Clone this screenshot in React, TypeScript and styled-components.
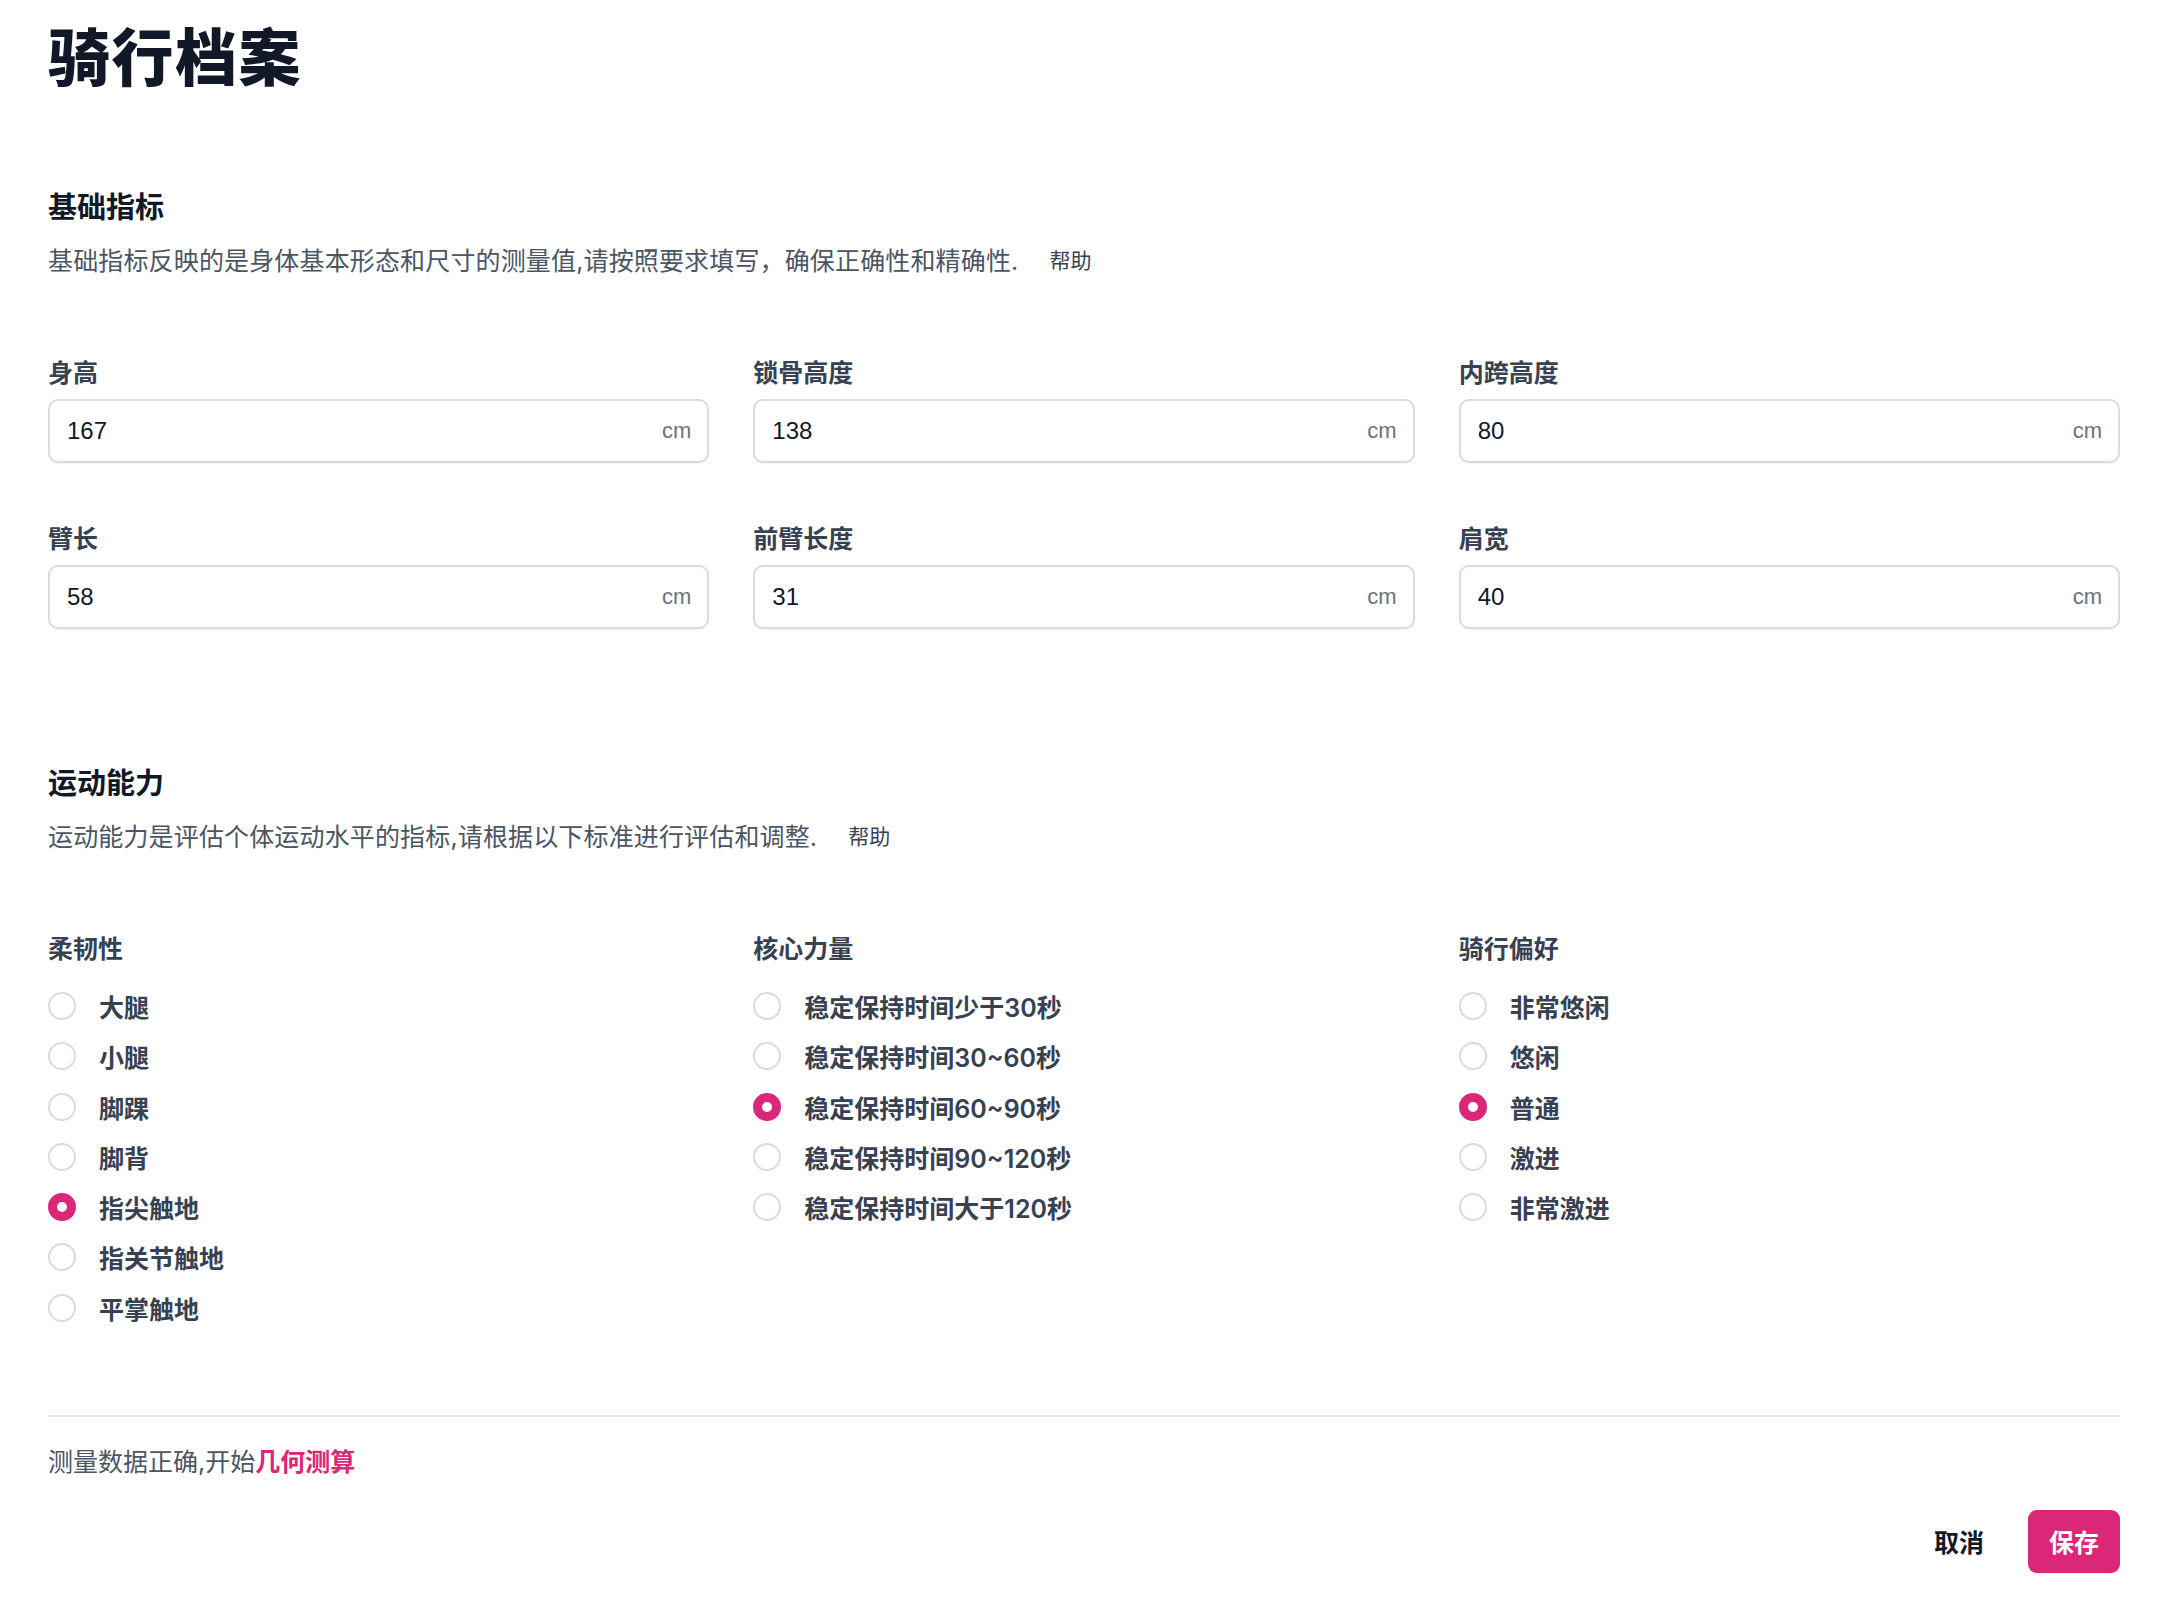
import React from "react";
import styled, { createGlobalStyle } from "styled-components";

const GlobalStyle = createGlobalStyle`
  html, body {
    margin: 0;
    padding: 0;
    background: #ffffff;
  }
  body {
    font-family: Inter, "Noto Sans CJK SC", "Noto Sans", sans-serif;
    color: #111827;
  }
  * {
    box-sizing: border-box;
  }
`;

const PINK = "#db2777";

const Page = styled.div`
  padding: 19px 46px 40px 48px;
  display: flex;
  flex-direction: column;
`;

const PageTitle = styled.h1`
  margin: 0;
  font-size: 62px;
  line-height: 80px;
  font-weight: 800;
  color: #111827;
  letter-spacing: 1.5px;
`;

const Section = styled.section<{ $top: number }>`
  margin-top: ${(p) => p.$top}px;
  display: flex;
  flex-direction: column;
`;

const SectionTitle = styled.h2`
  margin: 0;
  font-size: 29px;
  line-height: 42px;
  font-weight: 700;
  color: #111827;
`;

const SectionDesc = styled.p`
  margin: 14px 0 0 0;
  font-size: 25px;
  line-height: 36px;
  letter-spacing: 0.15px;
  color: #4b5563;
  display: flex;
  align-items: center;
`;

const HelpLink = styled.a`
  margin-left: 31px;
  font-size: 21px;
  color: #374151;
  text-decoration: none;
  cursor: pointer;
`;

const FieldGrid = styled.div`
  margin-top: 76px;
  display: grid;
  grid-template-columns: repeat(3, 1fr);
  column-gap: 44px;
  row-gap: 58px;
`;

const Field = styled.div`
  display: flex;
  flex-direction: column;
  gap: 8px;
`;

const FieldLabel = styled.label`
  font-size: 25px;
  line-height: 36px;
  font-weight: 600;
  color: #374151;
`;

const InputBox = styled.div`
  height: 64px;
  display: flex;
  align-items: center;
  padding: 0 16px 0 17px;
  border: 2px solid #d9dbe1;
  border-radius: 10px;
  box-shadow: 0 1px 2px rgba(0, 0, 0, 0.06);
  background: #ffffff;
`;

const NumberInput = styled.input`
  flex: 1;
  min-width: 0;
  border: none;
  outline: none;
  background: transparent;
  font-family: "Liberation Sans", Inter, "Noto Sans CJK SC", sans-serif;
  font-size: 24px;
  color: #111827;
  padding: 0;
`;

const Unit = styled.span`
  font-family: "Liberation Sans", Inter, sans-serif;
  font-size: 22px;
  color: #6b7280;
`;

const GroupGrid = styled.div`
  margin-top: 76px;
  display: grid;
  grid-template-columns: repeat(3, 1fr);
  column-gap: 44px;
`;

const Group = styled.fieldset`
  margin: 0;
  padding: 0;
  border: none;
  display: flex;
  flex-direction: column;
`;

const GroupLabel = styled.legend`
  padding: 0;
  font-size: 25px;
  line-height: 36px;
  font-weight: 600;
  color: #374151;
`;

const OptionList = styled.div`
  margin-top: 21px;
  display: flex;
  flex-direction: column;
  gap: 14.3px;
`;

const OptionRow = styled.label`
  display: flex;
  align-items: center;
  height: 36px;
  gap: 23px;
  cursor: pointer;
  font-size: 25px;
  font-weight: 600;
  color: #374151;
`;

const RadioDot = styled.input`
  appearance: none;
  margin: 0;
  width: 28px;
  height: 28px;
  border-radius: 50%;
  border: 2px solid #d9dbe1;
  background: #ffffff;
  flex-shrink: 0;
  cursor: pointer;

  &:checked {
    border: 9px solid ${PINK};
    background: #ffffff;
  }
`;

const Divider = styled.hr`
  margin: 89px 0 0 0;
  border: none;
  border-top: 2px solid #e5e7eb;
  width: 100%;
`;

const FooterNote = styled.p`
  margin: 27px 0 0 0;
  font-size: 25px;
  line-height: 36px;
  color: #4b5563;
`;

const NoteLink = styled.a`
  color: ${PINK};
  font-weight: 600;
  text-decoration: none;
  cursor: pointer;
`;

const ActionBar = styled.div`
  margin-top: 30px;
  display: flex;
  justify-content: flex-end;
  align-items: center;
  gap: 23px;
`;

const ActionButton = styled.button<{ $primary?: boolean }>`
  height: 63px;
  padding: 0 21px;
  border: none;
  border-radius: 9px;
  font-family: inherit;
  font-size: 25px;
  font-weight: 700;
  cursor: pointer;
  background: ${(p) => (p.$primary ? PINK : "transparent")};
  color: ${(p) => (p.$primary ? "#ffffff" : "#111827")};
  box-shadow: ${(p) => (p.$primary ? "0 1px 2px rgba(0,0,0,0.08)" : "none")};
`;

const measures = [
  { key: "height", label: "身高", value: "167" },
  { key: "collar", label: "锁骨高度", value: "138" },
  { key: "inseam", label: "内跨高度", value: "80" },
  { key: "arm", label: "臂长", value: "58" },
  { key: "forearm", label: "前臂长度", value: "31" },
  { key: "shoulder", label: "肩宽", value: "40" },
];

const groups = [
  {
    key: "flex",
    label: "柔韧性",
    options: ["大腿", "小腿", "脚踝", "脚背", "指尖触地", "指关节触地", "平掌触地"],
    initial: 4,
  },
  {
    key: "core",
    label: "核心力量",
    options: [
      "稳定保持时间少于30秒",
      "稳定保持时间30~60秒",
      "稳定保持时间60~90秒",
      "稳定保持时间90~120秒",
      "稳定保持时间大于120秒",
    ],
    initial: 2,
  },
  {
    key: "style",
    label: "骑行偏好",
    options: ["非常悠闲", "悠闲", "普通", "激进", "非常激进"],
    initial: 2,
  },
];

const App = () => {
  const [values, setValues] = React.useState<Record<string, string>>(
    Object.fromEntries(measures.map((m) => [m.key, m.value]))
  );
  const [choices, setChoices] = React.useState<Record<string, number>>(
    Object.fromEntries(groups.map((g) => [g.key, g.initial]))
  );

  return (
    <>
      <GlobalStyle />
      <Page>
        <PageTitle>骑行档案</PageTitle>

        <Section $top={88}>
          <SectionTitle>基础指标</SectionTitle>
          <SectionDesc>
            基础指标反映的是身体基本形态和尺寸的测量值,请按照要求填写，确保正确性和精确性.
            <HelpLink>帮助</HelpLink>
          </SectionDesc>
          <FieldGrid>
            {measures.map((m) => (
              <Field key={m.key}>
                <FieldLabel>{m.label}</FieldLabel>
                <InputBox>
                  <NumberInput
                    value={values[m.key]}
                    onChange={(e) =>
                      setValues({ ...values, [m.key]: e.target.value })
                    }
                  />
                  <Unit>cm</Unit>
                </InputBox>
              </Field>
            ))}
          </FieldGrid>
        </Section>

        <Section $top={134}>
          <SectionTitle>运动能力</SectionTitle>
          <SectionDesc>
            运动能力是评估个体运动水平的指标,请根据以下标准进行评估和调整.
            <HelpLink>帮助</HelpLink>
          </SectionDesc>
          <GroupGrid>
            {groups.map((g) => (
              <Group key={g.key}>
                <GroupLabel>{g.label}</GroupLabel>
                <OptionList>
                  {g.options.map((opt, i) => (
                    <OptionRow key={opt}>
                      <RadioDot
                        type="radio"
                        name={g.key}
                        checked={choices[g.key] === i}
                        onChange={() => setChoices({ ...choices, [g.key]: i })}
                      />
                      {opt}
                    </OptionRow>
                  ))}
                </OptionList>
              </Group>
            ))}
          </GroupGrid>
        </Section>

        <Divider />
        <FooterNote>
          测量数据正确,开始<NoteLink>几何测算</NoteLink>
        </FooterNote>
        <ActionBar>
          <ActionButton>取消</ActionButton>
          <ActionButton $primary>保存</ActionButton>
        </ActionBar>
      </Page>
    </>
  );
};

export default App;
